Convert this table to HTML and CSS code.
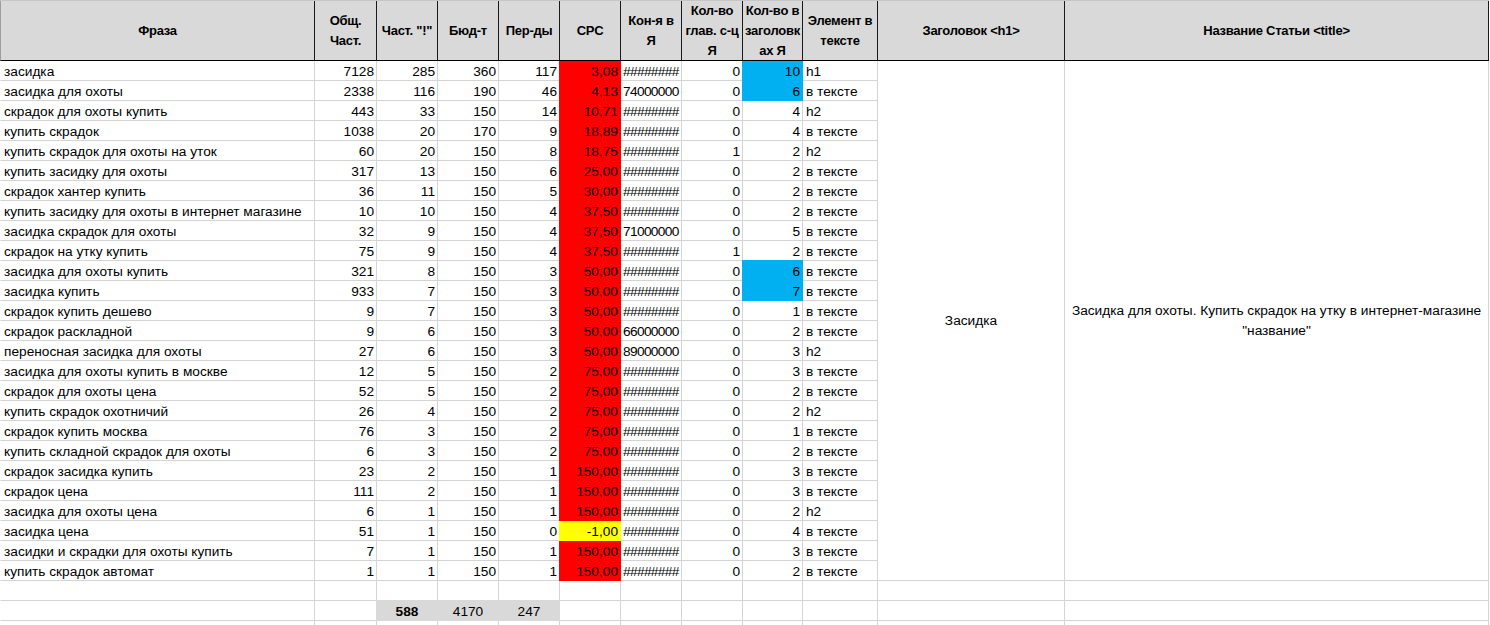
FILE: index.html
```html
<!DOCTYPE html>
<html lang="ru">
<head>
<meta charset="utf-8">
<title>Семантическое ядро</title>
<link rel="stylesheet" href="styles.css">
</head>
<body>
<div class="sheet">
  <div class="h first">Фраза</div>
  <div class="h">Общ.<br>Част.</div>
  <div class="h">Част. "!"</div>
  <div class="h">Бюд-т</div>
  <div class="h">Пер-ды</div>
  <div class="h">CPC</div>
  <div class="h">Кон-я в<br>Я</div>
  <div class="h">Кол-во<br>глав. с-ц<br>Я</div>
  <div class="h">Кол-во в<br>заголовк<br>ах Я</div>
  <div class="h">Элемент в<br>тексте</div>
  <div class="h">Заголовок &lt;h1&gt;</div>
  <div class="h">Название Статьи &lt;title&gt;</div>

  <div class="c merged h1col">Засидка</div>
  <div class="c merged titlecol">Засидка для охоты. Купить скрадок на утку в интернет-магазине<br>"название"</div>

  <div class="c l first">засидка</div><div class="c r">7128</div><div class="c r">285</div><div class="c r">360</div><div class="c r">117</div><div class="c r red">3,08</div><div class="c l k">########</div><div class="c r">0</div><div class="c r blue">10</div><div class="c l">h1</div>
  <div class="c l first">засидка для охоты</div><div class="c r">2338</div><div class="c r">116</div><div class="c r">190</div><div class="c r">46</div><div class="c r red">4,13</div><div class="c l k">74000000</div><div class="c r">0</div><div class="c r blue">6</div><div class="c l">в тексте</div>
  <div class="c l first">скрадок для охоты купить</div><div class="c r">443</div><div class="c r">33</div><div class="c r">150</div><div class="c r">14</div><div class="c r red">10,71</div><div class="c l k">########</div><div class="c r">0</div><div class="c r">4</div><div class="c l">h2</div>
  <div class="c l first">купить скрадок</div><div class="c r">1038</div><div class="c r">20</div><div class="c r">170</div><div class="c r">9</div><div class="c r red">18,89</div><div class="c l k">########</div><div class="c r">0</div><div class="c r">4</div><div class="c l">в тексте</div>
  <div class="c l first">купить скрадок для охоты на уток</div><div class="c r">60</div><div class="c r">20</div><div class="c r">150</div><div class="c r">8</div><div class="c r red">18,75</div><div class="c l k">########</div><div class="c r">1</div><div class="c r">2</div><div class="c l">h2</div>
  <div class="c l first">купить засидку для охоты</div><div class="c r">317</div><div class="c r">13</div><div class="c r">150</div><div class="c r">6</div><div class="c r red">25,00</div><div class="c l k">########</div><div class="c r">0</div><div class="c r">2</div><div class="c l">в тексте</div>
  <div class="c l first">скрадок хантер купить</div><div class="c r">36</div><div class="c r">11</div><div class="c r">150</div><div class="c r">5</div><div class="c r red">30,00</div><div class="c l k">########</div><div class="c r">0</div><div class="c r">2</div><div class="c l">в тексте</div>
  <div class="c l first">купить засидку для охоты в интернет магазине</div><div class="c r">10</div><div class="c r">10</div><div class="c r">150</div><div class="c r">4</div><div class="c r red">37,50</div><div class="c l k">########</div><div class="c r">0</div><div class="c r">2</div><div class="c l">в тексте</div>
  <div class="c l first">засидка скрадок для охоты</div><div class="c r">32</div><div class="c r">9</div><div class="c r">150</div><div class="c r">4</div><div class="c r red">37,50</div><div class="c l k">71000000</div><div class="c r">0</div><div class="c r">5</div><div class="c l">в тексте</div>
  <div class="c l first">скрадок на утку купить</div><div class="c r">75</div><div class="c r">9</div><div class="c r">150</div><div class="c r">4</div><div class="c r red">37,50</div><div class="c l k">########</div><div class="c r">1</div><div class="c r">2</div><div class="c l">в тексте</div>
  <div class="c l first">засидка для охоты купить</div><div class="c r">321</div><div class="c r">8</div><div class="c r">150</div><div class="c r">3</div><div class="c r red">50,00</div><div class="c l k">########</div><div class="c r">0</div><div class="c r blue top">6</div><div class="c l">в тексте</div>
  <div class="c l first">засидка купить</div><div class="c r">933</div><div class="c r">7</div><div class="c r">150</div><div class="c r">3</div><div class="c r red">50,00</div><div class="c l k">########</div><div class="c r">0</div><div class="c r blue">7</div><div class="c l">в тексте</div>
  <div class="c l first">скрадок купить дешево</div><div class="c r">9</div><div class="c r">7</div><div class="c r">150</div><div class="c r">3</div><div class="c r red">50,00</div><div class="c l k">########</div><div class="c r">0</div><div class="c r">1</div><div class="c l">в тексте</div>
  <div class="c l first">скрадок раскладной</div><div class="c r">9</div><div class="c r">6</div><div class="c r">150</div><div class="c r">3</div><div class="c r red">50,00</div><div class="c l k">66000000</div><div class="c r">0</div><div class="c r">2</div><div class="c l">в тексте</div>
  <div class="c l first">переносная засидка для охоты</div><div class="c r">27</div><div class="c r">6</div><div class="c r">150</div><div class="c r">3</div><div class="c r red">50,00</div><div class="c l k">89000000</div><div class="c r">0</div><div class="c r">3</div><div class="c l">h2</div>
  <div class="c l first">засидка для охоты купить в москве</div><div class="c r">12</div><div class="c r">5</div><div class="c r">150</div><div class="c r">2</div><div class="c r red">75,00</div><div class="c l k">########</div><div class="c r">0</div><div class="c r">3</div><div class="c l">в тексте</div>
  <div class="c l first">скрадок для охоты цена</div><div class="c r">52</div><div class="c r">5</div><div class="c r">150</div><div class="c r">2</div><div class="c r red">75,00</div><div class="c l k">########</div><div class="c r">0</div><div class="c r">2</div><div class="c l">в тексте</div>
  <div class="c l first">купить скрадок охотничий</div><div class="c r">26</div><div class="c r">4</div><div class="c r">150</div><div class="c r">2</div><div class="c r red">75,00</div><div class="c l k">########</div><div class="c r">0</div><div class="c r">2</div><div class="c l">h2</div>
  <div class="c l first">скрадок купить москва</div><div class="c r">76</div><div class="c r">3</div><div class="c r">150</div><div class="c r">2</div><div class="c r red">75,00</div><div class="c l k">########</div><div class="c r">0</div><div class="c r">1</div><div class="c l">в тексте</div>
  <div class="c l first">купить складной скрадок для охоты</div><div class="c r">6</div><div class="c r">3</div><div class="c r">150</div><div class="c r">2</div><div class="c r red">75,00</div><div class="c l k">########</div><div class="c r">0</div><div class="c r">2</div><div class="c l">в тексте</div>
  <div class="c l first">скрадок засидка купить</div><div class="c r">23</div><div class="c r">2</div><div class="c r">150</div><div class="c r">1</div><div class="c r red">150,00</div><div class="c l k">########</div><div class="c r">0</div><div class="c r">3</div><div class="c l">в тексте</div>
  <div class="c l first">скрадок цена</div><div class="c r">111</div><div class="c r">2</div><div class="c r">150</div><div class="c r">1</div><div class="c r red">150,00</div><div class="c l k">########</div><div class="c r">0</div><div class="c r">3</div><div class="c l">в тексте</div>
  <div class="c l first">засидка для охоты цена</div><div class="c r">6</div><div class="c r">1</div><div class="c r">150</div><div class="c r">1</div><div class="c r red">150,00</div><div class="c l k">########</div><div class="c r">0</div><div class="c r">2</div><div class="c l">h2</div>
  <div class="c l first">засидка цена</div><div class="c r">51</div><div class="c r">1</div><div class="c r">150</div><div class="c r">0</div><div class="c r yellow">-1,00</div><div class="c l k">########</div><div class="c r">0</div><div class="c r">4</div><div class="c l">в тексте</div>
  <div class="c l first">засидки и скрадки для охоты купить</div><div class="c r">7</div><div class="c r">1</div><div class="c r">150</div><div class="c r">1</div><div class="c r red">150,00</div><div class="c l k">########</div><div class="c r">0</div><div class="c r">3</div><div class="c l">в тексте</div>
  <div class="c l first">купить скрадок автомат</div><div class="c r">1</div><div class="c r">1</div><div class="c r">150</div><div class="c r">1</div><div class="c r red">150,00</div><div class="c l k">########</div><div class="c r">0</div><div class="c r">2</div><div class="c l">в тексте</div>

  <div class="c first"></div><div class="c"></div><div class="c"></div><div class="c"></div><div class="c"></div><div class="c"></div><div class="c"></div><div class="c"></div><div class="c"></div><div class="c"></div><div class="c"></div><div class="c"></div>
  <div class="c first"></div><div class="c"></div><div class="c m total bold">588</div><div class="c m total">4170</div><div class="c m total">247</div><div class="c"></div><div class="c"></div><div class="c"></div><div class="c"></div><div class="c"></div><div class="c"></div><div class="c"></div>
  <div class="c first"></div><div class="c"></div><div class="c"></div><div class="c"></div><div class="c"></div><div class="c"></div><div class="c"></div><div class="c"></div><div class="c"></div><div class="c"></div><div class="c"></div><div class="c"></div>
</div>
</body>
</html>
```

FILE: styles.css
```css
html, body {
  margin: 0;
  padding: 0;
  background: #ffffff;
  overflow: hidden;
}

.sheet {
  display: grid;
  grid-template-columns: 315px 62px 61px 61px 61px 61px 61px 61px 60px 75px 187px 424px;
  grid-template-rows: 60px repeat(29, 20px);
  border-top: 1px solid #c6c6c6;
  font-family: "Liberation Sans", Arial, sans-serif;
  font-size: 13.7px;
  color: #000000;
  width: 1489px;
}

.h {
  box-sizing: border-box;
  background: #d9d9d9;
  border-right: 1px solid #1a1a1a;
  border-bottom: 1px solid #000000;
  font-weight: bold;
  font-size: 13px;
  letter-spacing: -0.25px;
  line-height: 20px;
  text-align: center;
  display: flex;
  align-items: center;
  justify-content: center;
  white-space: nowrap;
}

.h.first {
  border-left: 1px solid #9e9e9e;
}

.c {
  box-sizing: border-box;
  border-right: 1px solid #d4d4d4;
  border-bottom: 1px solid #d4d4d4;
  line-height: 19px;
  padding: 1px 2px 0 2px;
  white-space: nowrap;
  overflow: hidden;
}

.c.first {
  border-left: 1px solid #ffffff;
}

.l {
  text-align: left;
  padding-left: 3px;
}

.k {
  padding-left: 2px;
  letter-spacing: -0.65px;
}

.r {
  text-align: right;
}

.m {
  text-align: center;
}

.merged {
  display: flex;
  align-items: center;
  justify-content: center;
  text-align: center;
  line-height: 20px;
  padding: 0;
  white-space: normal;
}

.h1col {
  grid-column: 11;
  grid-row: 2 / span 26;
}

.titlecol {
  grid-column: 12;
  grid-row: 2 / span 26;
}

.red {
  background: #ff0000;
  border-color: #ff0000;
  box-shadow: -1px 0 0 #ff0000;
}

.yellow {
  background: #ffff00;
  border-color: #ffff00;
  box-shadow: -1px 0 0 #ffff00;
}

.blue {
  background: #00b0f0;
  border-color: #00b0f0;
  box-shadow: -1px 0 0 #00b0f0;
}

.blue.top {
  box-shadow: -1px 0 0 #00b0f0, 0 -1px 0 #00b0f0, -1px -1px 0 #00b0f0;
}

.total {
  background: #d9d9d9;
  border-color: #d9d9d9;
  box-shadow: -1px 0 0 #d9d9d9, 0 -1px 0 #d9d9d9, -1px -1px 0 #d9d9d9;
}

.bold {
  font-weight: bold;
}
```
